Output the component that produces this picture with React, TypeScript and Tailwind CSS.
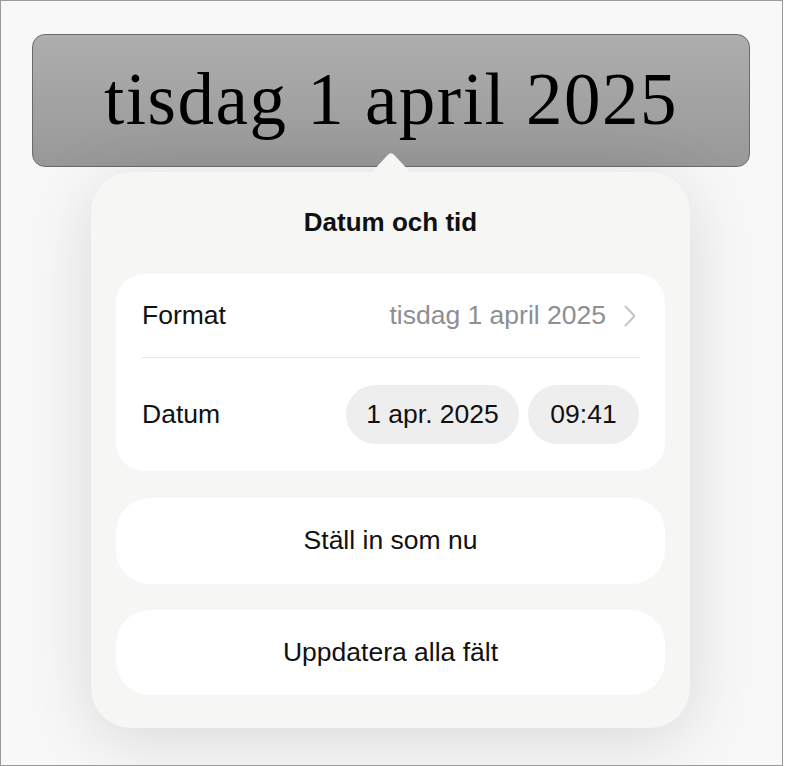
import React from "react";

const sans = { fontFamily: '"Liberation Sans", Arial, sans-serif' };

export default function App() {
  return (
    <div className="w-[785px] h-[766px] bg-white" style={sans}>
      <div className="w-[783px] h-[766px] border border-[#9a9a9a] bg-[#f8f8f8] overflow-hidden flex flex-col">
        <div className="ml-[31px] mt-[33px] w-[718px] h-[133px] rounded-[13px] border border-[#6a6a6a] bg-gradient-to-b from-[#aeaeae] to-[#989898] flex items-center justify-center">
          <span
            className="text-[73px] leading-none tracking-[1.5px] text-black pb-[3px]"
            style={{ fontFamily: '"Liberation Serif", "Times New Roman", serif' }}
          >
            tisdag 1 april 2025
          </span>
        </div>

        <div className="relative ml-[90px] mt-[5px] w-[599px] h-[556px] rounded-[40px] bg-[#f6f6f5] shadow-[0_12px_70px_rgba(0,0,0,0.13)] px-[25px] pt-[34px] flex flex-col">
          <svg
            className="absolute left-[280px] top-[-20px]"
            width="40"
            height="21"
            viewBox="0 0 40 21"
          >
            <path d="M0 21 L16.5 3.2 Q20 -0.6 23.5 3.2 L40 21 Z" fill="#f6f6f5" />
          </svg>

          <div className="text-center text-[26px] leading-[32px] font-bold text-[#111]">
            Datum och tid
          </div>

          <div className="mt-[36px] h-[197px] rounded-[28px] bg-white flex flex-col">
            <div className="h-[83px] flex items-center justify-between pl-[26px] pr-[29px] text-[26.5px]">
              <span className="text-[#111]">Format</span>
              <div className="flex items-center gap-[18px]">
                <span className="text-[#8e8e93]">tisdag 1 april 2025</span>
                <svg width="12" height="22" viewBox="0 0 12 22">
                  <path
                    d="M1.5 1.5 L10.5 11 L1.5 20.5"
                    fill="none"
                    stroke="#c4c4c7"
                    strokeWidth="2"
                    strokeLinecap="round"
                    strokeLinejoin="round"
                  />
                </svg>
              </div>
            </div>
            <div className="ml-[26px] mr-[25px] h-px bg-[#e6e6e8]" />
            <div className="flex-1 flex items-center justify-between pl-[26px] pr-[26px] text-[26.5px]">
              <span className="text-[#111]">Datum</span>
              <div className="flex items-center gap-[9px]">
                <div className="h-[59px] w-[173px] rounded-full bg-[#eeeeef] flex items-center justify-center text-[#111]">
                  1 apr. 2025
                </div>
                <div className="h-[59px] w-[111px] rounded-full bg-[#eeeeef] flex items-center justify-center text-[#111]">
                  09:41
                </div>
              </div>
            </div>
          </div>

          <div className="mt-[27px] h-[86px] rounded-[34px] bg-white flex items-center justify-center text-[26.5px] text-[#111]">
            Ställ in som nu
          </div>
          <div className="mt-[26px] h-[85px] rounded-[34px] bg-white flex items-center justify-center text-[26.5px] text-[#111]">
            Uppdatera alla fält
          </div>
        </div>
      </div>
    </div>
  );
}
